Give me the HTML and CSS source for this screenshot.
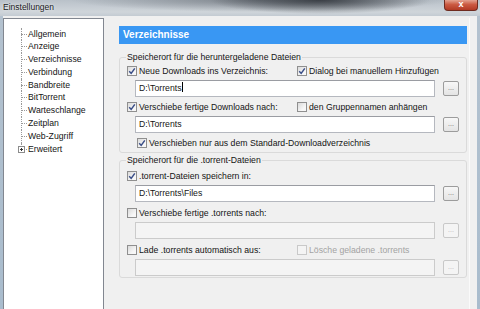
FILE: index.html
```html
<!DOCTYPE html>
<html>

<head>
  <title>Einstellungen</title>
  <link rel="stylesheet" href="styles.css">
</head>

<body>
  <div class="window">
    <!-- title bar -->
    <div class="titlebar">
      <span class="title">Einstellungen</span>
      <span class="close">x</span>
    </div>

    <div class="client">
      <!-- tree -->
      <ul class="tree">
        <li>Allgemein</li>
        <li>Anzeige</li>
        <li>Verzeichnisse</li>
        <li>Verbindung</li>
        <li>Bandbreite</li>
        <li>BitTorrent</li>
        <li>Warteschlange</li>
        <li>Zeitplan</li>
        <li>Web-Zugriff</li>
        <li class="last">
          <svg class="expander" width="7" height="7" viewBox="0 0 7 7">
            <rect x="0.5" y="0.5" width="6" height="6" fill="#fff" stroke="#8c8c8c" />
            <path d="M2 3.5h3M3.5 2v3" stroke="#333" stroke-width="1" />
          </svg>
          Erweitert
        </li>
      </ul>

      <!-- page -->
      <div class="page">
        <div class="page-head">Verzeichnisse</div>

        <div class="group">
          <div class="group-title">Speicherort für die heruntergeladene Dateien</div>
          <div class="row">
            <label class="check col"><span class="box on"><svg width="8" height="8" viewBox="0 0 8 8"><path d="M1.2 4.2L3.2 6.4L6.8 1.4" fill="none" stroke="#3b4f88" stroke-width="1.5" /></svg></span>Neue Downloads ins Verzeichnis:</label>
            <label class="check"><span class="box on"><svg width="8" height="8" viewBox="0 0 8 8"><path d="M1.2 4.2L3.2 6.4L6.8 1.4" fill="none" stroke="#3b4f88" stroke-width="1.5" /></svg></span>Dialog bei manuellem Hinzufügen</label>
          </div>
          <div class="field">
            <div class="input">D:\Torrents<span class="caret"></span></div>
            <div class="browse">...</div>
          </div>
          <div class="row">
            <label class="check col"><span class="box on"><svg width="8" height="8" viewBox="0 0 8 8"><path d="M1.2 4.2L3.2 6.4L6.8 1.4" fill="none" stroke="#3b4f88" stroke-width="1.5" /></svg></span>Verschiebe fertige Downloads nach:</label>
            <label class="check"><span class="box"></span>den Gruppennamen anhängen</label>
          </div>
          <div class="field">
            <div class="input">D:\Torrents</div>
            <div class="browse">...</div>
          </div>
          <div class="row indent">
            <label class="check"><span class="box on"><svg width="8" height="8" viewBox="0 0 8 8"><path d="M1.2 4.2L3.2 6.4L6.8 1.4" fill="none" stroke="#3b4f88" stroke-width="1.5" /></svg></span>Verschieben nur aus dem Standard-Downloadverzeichnis</label>
          </div>
        </div>

        <div class="group spread">
          <div class="group-title">Speicherort für die .torrent-Dateien</div>
          <div class="row">
            <label class="check"><span class="box on"><svg width="8" height="8" viewBox="0 0 8 8"><path d="M1.2 4.2L3.2 6.4L6.8 1.4" fill="none" stroke="#3b4f88" stroke-width="1.5" /></svg></span>.torrent-Dateien speichern in:</label>
          </div>
          <div class="field">
            <div class="input">D:\Torrents\Files</div>
            <div class="browse">...</div>
          </div>
          <div class="row">
            <label class="check"><span class="box"></span>Verschiebe fertige .torrents nach:</label>
          </div>
          <div class="field">
            <div class="input disabled"></div>
            <div class="browse disabled">...</div>
          </div>
          <div class="row">
            <label class="check col"><span class="box"></span>Lade .torrents automatisch aus:</label>
            <label class="check disabled"><span class="box"></span>Lösche geladene .torrents</label>
          </div>
          <div class="field">
            <div class="input disabled"></div>
            <div class="browse disabled">...</div>
          </div>
        </div>
      </div>
    </div>
  </div>
</body>

</html>
```

FILE: styles.css
```css
body {
  margin: 0;
  font-family: "Liberation Sans", Arial, sans-serif;
  font-size: 8.7px;
  color: #141414;
}

.window {
  width: 480px;
  height: 309px;
  overflow: hidden;
  display: flex;
  flex-direction: column;
  background: linear-gradient(#b4c2cf, #a9bccd);
}

/* title bar */
.titlebar {
  height: 16px;
  display: flex;
  align-items: flex-start;
  background:
    radial-gradient(ellipse 110px 14px at 320px 0, rgba(30, 34, 40, 0.75), transparent),
    radial-gradient(ellipse 190px 12px at 260px 0, rgba(80, 86, 94, 0.6), transparent),
    linear-gradient(#b9c1c9, #cfd5da 75%, #c3cbd2);
}

.title {
  padding: 2px 0 0 3px;
  font-size: 8.5px;
  line-height: 11px;
  color: #1a1a1a;
  text-shadow: 0 0 3px rgba(255, 255, 255, 0.9);
}

.close {
  margin-left: auto;
  margin-right: 2px;
  width: 34px;
  height: 11px;
  box-sizing: border-box;
  border: 1px solid #6e2b20;
  border-top: none;
  border-radius: 0 0 4px 4px;
  background: linear-gradient(#e3a290, #cb5a42 45%, #b23a24);
  color: #fff;
  font-weight: bold;
  font-size: 9px;
  line-height: 9px;
  text-align: center;
}

.client {
  flex: 1;
  display: flex;
  margin: 0 3px;
  padding-top: 2px;
  background-color: #f0f0f0;
}

/* tree */
.tree {
  width: 101px;
  box-sizing: border-box;
  margin: 0 0 -4px 0;
  padding: 8.5px 0 0 0;
  list-style: none;
  border: 1px solid #828790;
  background-color: #fff;
}

.tree li {
  position: relative;
  height: 12.8px;
  line-height: 12.8px;
  padding-left: 24px;
}

.tree li::before {
  content: "";
  position: absolute;
  left: 17px;
  top: 6px;
  width: 6px;
  border-top: 1px dotted #9a9a9a;
}

.tree li::after {
  content: "";
  position: absolute;
  left: 17px;
  top: 0;
  height: 100%;
  border-left: 1px dotted #9a9a9a;
}

.tree li.last::after {
  height: 6px;
}

.tree .expander {
  position: absolute;
  left: 14px;
  top: 3px;
  z-index: 1;
}

/* page */
.page {
  width: 348px;
  margin-left: 15px;
  padding-right: 2px;
  border-right: 1px solid #fafafa;
}

.page-head {
  margin-top: 8px;
  height: 18px;
  line-height: 18px;
  padding-left: 4px;
  background-color: #3997f3;
  color: #fff;
  font-weight: bold;
  font-size: 10px;
}

.group {
  margin-top: 13px;
  padding: 0 0 3px 7px;
  border: 1px solid #dadada;
  border-radius: 3px;
}

.group + .group {
  margin-top: 7px;
}

.group-title {
  width: fit-content;
  height: 13px;
  line-height: 13px;
  margin: -7px 0 -3px -1px;
  padding: 0 1px;
  background-color: #f0f0f0;
}

.row {
  display: flex;
  align-items: center;
  height: 12px;
  margin-top: 4px;
}

.spread {
  padding-bottom: 1px;
}

.spread .group-title {
  margin-bottom: -2px;
}

.spread .row {
  margin-top: 5px;
}

.indent {
  margin-left: 10px;
}

.check {
  display: flex;
  align-items: center;
  white-space: nowrap;
}

.col {
  width: 170px;
}

.box {
  width: 10px;
  height: 10px;
  box-sizing: border-box;
  margin-right: 2px;
  border: 1px solid #8f8f8f;
  background: linear-gradient(135deg, #dadada, #f7f7f7 70%);
  display: flex;
  align-items: center;
  justify-content: center;
}

.check.disabled {
  color: #a3a3a3;
}

.check.disabled .box {
  border-color: #c9c9c9;
  background: #f4f4f4;
}

.field {
  display: flex;
  align-items: center;
  margin: 3px 0 0 8px;
}

.input {
  width: 300px;
  height: 17px;
  box-sizing: border-box;
  padding-left: 3px;
  line-height: 15px;
  border: 1px solid #b5b8bf;
  border-top-color: #9a9ca2;
  background-color: #fff;
}

.input.disabled {
  background-color: #f4f4f4;
  border-color: #cbcbcb;
}

.caret {
  display: inline-block;
  width: 1px;
  height: 10px;
  margin-left: 1px;
  vertical-align: -1px;
  background-color: #000;
}

.browse {
  width: 16px;
  height: 15px;
  box-sizing: border-box;
  margin-left: 8px;
  border: 1px solid #9c9c9c;
  border-radius: 2px;
  background: linear-gradient(#f7f7f7, #e4e4e4);
  color: #666;
  font-size: 7px;
  line-height: 11px;
  text-align: center;
}

.browse.disabled {
  border-color: #c8c8c8;
  background: #f4f4f4;
  color: #b5b5b5;
}
```
